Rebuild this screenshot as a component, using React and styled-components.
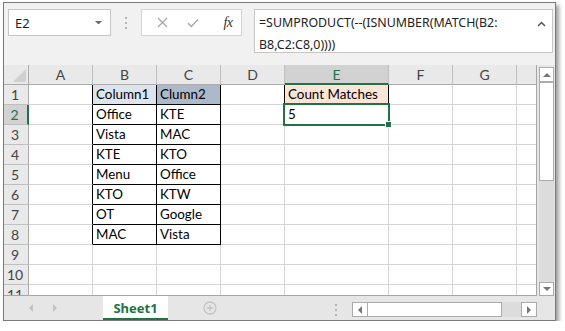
import React from 'react';
import styled, { createGlobalStyle } from 'styled-components';

const Global = createGlobalStyle`
  html, body { margin: 0; padding: 0; background: #ffffff; }
  body { padding: 2px 0 0 3px; font-family: Lato, "Liberation Sans", sans-serif; }
  * { box-sizing: border-box; }
`;

const GREEN = '#217346';
const GRID = '#d4d4d4';
const HEAD_LINE = '#bfbfbf';

const Window = styled.div`
  width: 553px;
  border: 1px solid #7a7a7a;
  box-shadow: 3px 3px 4px rgba(0, 0, 0, 0.38);
  background: #e6e6e6;
`;

const FormulaBar = styled.div`
  height: 62px;
  display: flex;
  align-items: flex-start;
  padding: 6px 2px 0 4px;
  background: #f1f1f1;
`;

const NameBox = styled.div`
  width: 103px;
  height: 27px;
  border: 1px solid #c6c6c6;
  background: #fff;
  display: flex;
  align-items: center;
  justify-content: space-between;
  padding: 0 8px 0 6px;
  font: 13px "Noto Sans", sans-serif;
  color: #222;
`;

const Dots = styled.div`
  width: ${p => p.$w}px;
  height: ${p => p.$h}px;
  display: flex;
  flex-direction: column;
  align-items: center;
  justify-content: center;
  gap: 3px;
  & > i {
    width: 2px;
    height: 2px;
    background: #b4b4b4;
    display: block;
  }
`;

const ButtonsBox = styled.div`
  width: 101px;
  height: 27px;
  border: 1px solid #d4d4d4;
  background: #fff;
  display: flex;
  align-items: center;
  padding-left: 14px;
`;

const FxButton = styled.span`
  width: ${p => p.$w}px;
  margin-left: ${p => p.$ml || 0}px;
  display: flex;
  justify-content: center;
  align-items: center;
`;

const FxText = styled.span`
  font: italic 14px "Liberation Serif", serif;
  color: #333;
  letter-spacing: -0.5px;
`;

const FormulaBox = styled.div`
  flex: 1;
  margin-left: 12px;
  height: 44px;
  border: 1px solid #c6c6c6;
  background: #fff;
  display: flex;
  justify-content: space-between;
  padding: 2px 6px 0 4px;
`;

const FormulaText = styled.div`
  font: 12.4px "Noto Sans", sans-serif;
  line-height: 22px;
  color: #222;
  white-space: nowrap;
`;

const Sheet = styled.div`
  display: flex;
  height: 231px;
`;

const GridArea = styled.div`
  position: relative;
  width: 533px;
  height: 231px;
  overflow: hidden;
  border-right: 1px solid #a6a6a6;
  border-bottom: 1px solid #a6a6a6;
  background: #fff;
`;

const Grid = styled.div`
  display: grid;
  grid-template-columns: 25px 64px 64px 64px 64px 104px 64px 64px 64px;
  grid-auto-rows: 20px;
`;

const HeadCell = styled.div`
  background: ${p => (p.$sel ? '#d2d2d2' : '#e9e9e9')};
  border-right: 1px solid ${HEAD_LINE};
  border-bottom: ${p => (p.$sel ? `2px solid ${GREEN}` : `1px solid #ababab`)};
  color: ${p => (p.$sel ? GREEN : '#444')};
  font: 14px Lato, sans-serif;
  display: flex;
  align-items: center;
  justify-content: center;
`;

const RowHead = styled.div`
  background: ${p => (p.$sel ? '#d2d2d2' : '#e9e9e9')};
  border-right: ${p => (p.$sel ? `2px solid ${GREEN}` : `1px solid #ababab`)};
  border-bottom: 1px solid ${HEAD_LINE};
  color: ${p => (p.$sel ? GREEN : '#444')};
  font: 14px Lato, sans-serif;
  display: flex;
  align-items: center;
  justify-content: center;
  padding-right: 2px;
`;

const Corner = styled.div`
  background: #e9e9e9;
  border-right: 1px solid #ababab;
  border-bottom: 1px solid #ababab;
  display: flex;
  align-items: flex-end;
  justify-content: flex-end;
  padding: 0 2px 2px 0;
`;

const Cell = styled.div`
  border-right: 1px solid ${p => p.$rc || GRID};
  border-bottom: 1px solid ${p => p.$bc || GRID};
  background: ${p => p.$bg || '#fff'};
  font: 13.4px Lato, sans-serif;
  color: #000;
  padding: 0 3px;
  line-height: 19px;
  white-space: nowrap;
  overflow: hidden;
`;

const Selection = styled.div`
  position: absolute;
  left: 279px;
  top: 38px;
  width: 107px;
  height: 23px;
  border: 2px solid ${GREEN};
  pointer-events: none;
`;

const FillHandle = styled.div`
  position: absolute;
  left: 381px;
  top: 56px;
  width: 7px;
  height: 7px;
  background: ${GREEN};
  border: 1px solid #fff;
`;

const VScroll = styled.div`
  width: 18px;
  display: flex;
  flex-direction: column;
  padding: 2px 1px 0 2px;
  background: #e6e6e6;
`;

const ArrowBtn = styled.div`
  width: ${p => p.$w}px;
  height: ${p => p.$h}px;
  flex: none;
  background: #fff;
  border: 1px solid #ababab;
  display: flex;
  align-items: center;
  justify-content: center;
`;

const VTrack = styled.div`
  flex: 1;
  background: #dcdcdc;
`;

const VThumb = styled.div`
  height: 99px;
  background: #fff;
  border: 1px solid #ababab;
`;

const TabBar = styled.div`
  height: 24px;
  display: flex;
  align-items: stretch;
  padding-right: 18px;
  background: #e6e6e6;
`;

const TabNav = styled.div`
  width: 99px;
  display: flex;
  align-items: center;
  padding-left: 25px;
  gap: 20px;
`;

const Tab = styled.div`
  width: 65px;
  background: #fff;
  border-bottom: 2px solid ${GREEN};
  display: flex;
  align-items: center;
  justify-content: center;
  padding-top: 1px;
  font: bold 13px "Noto Sans", sans-serif;
  color: ${GREEN};
`;

const AddSheet = styled.div`
  margin-left: 35px;
  display: flex;
  align-items: center;
`;

const HScrollGroup = styled.div`
  margin-left: auto;
  display: flex;
  align-items: flex-start;
  padding-top: 6px;
  gap: 8px;
`;

const HScroll = styled.div`
  width: 185px;
  height: 15px;
  display: flex;
`;

const HThumb = styled.div`
  width: 134px;
  background: #fff;
  border: 1px solid #ababab;
  border-left: none;
`;

const HTrack = styled.div`
  flex: 1;
  background: #dcdcdc;
`;

const Caret = styled.svg`
  flex: none;
  margin-top: 9px;
`;

const Tri = ({ dir, color = '#777', size = 4 }) => {
  const s = size;
  const pts = {
    up: `0,${s} ${s},0 ${2 * s},${s}`,
    down: `0,0 ${2 * s},0 ${s},${s}`,
    left: `${s},0 ${s},${2 * s} 0,${s}`,
    right: `0,0 ${s},${s} 0,${2 * s}`,
  }[dir];
  const w = dir === 'up' || dir === 'down' ? 2 * s : s;
  const h = dir === 'up' || dir === 'down' ? s : 2 * s;
  return (
    <svg width={w} height={h} viewBox={`0 0 ${w} ${h}`}>
      <polygon points={pts} fill={color} />
    </svg>
  );
};

const columns = [
  { k: 'A' }, { k: 'B' }, { k: 'C' }, { k: 'D' }, { k: 'E' }, { k: 'F' }, { k: 'G' }, { k: 'H', label: '' },
];

const data = {
  1: { B: 'Column1', C: 'Clumn2', E: 'Count Matches' },
  2: { B: 'Office', C: 'KTE', E: '5' },
  3: { B: 'Vista', C: 'MAC' },
  4: { B: 'KTE', C: 'KTO' },
  5: { B: 'Menu', C: 'Office' },
  6: { B: 'KTO', C: 'KTW' },
  7: { B: 'OT', C: 'Google' },
  8: { B: 'MAC', C: 'Vista' },
};

const fills = { B1: '#dde4ee', C1: '#acb9ca', E1: '#fce4d6' };

function cellStyle(r, k) {
  const inTable = r >= 1 && r <= 8;
  let rc;
  let bc;
  if (inTable && (k === 'A' || k === 'B' || k === 'C')) rc = '#000';
  if (r === 1 && (k === 'D' || k === 'E')) rc = '#000';
  if (inTable && (k === 'B' || k === 'C')) bc = '#000';
  return { rc, bc, bg: fills[`${k}${r}`] };
}

export default function App() {
  const rows = Array.from({ length: 11 }, (_, i) => i + 1);
  return (
    <>
      <Global />
      <Window>
        <FormulaBar>
          <NameBox>
            <span>E2</span>
            <Tri dir="down" size={3.5} color="#6a6a6a" />
          </NameBox>
          <Dots $w={30} $h={27}>
            <i /><i /><i />
          </Dots>
          <ButtonsBox>
            <FxButton $w={12}>
              <svg width="11" height="11" viewBox="0 0 11 11">
                <path d="M1 1 L10 10 M10 1 L1 10" stroke="#a8a8a8" strokeWidth="1.3" fill="none" />
              </svg>
            </FxButton>
            <FxButton $w={26} $ml={12}>
              <svg width="12" height="10" viewBox="0 0 12 10">
                <path d="M1 5.2 L4.3 8.5 L11 1.5" stroke="#a8a8a8" strokeWidth="1.4" fill="none" />
              </svg>
            </FxButton>
            <FxButton $w={20} $ml={12}>
              <FxText>fx</FxText>
            </FxButton>
          </ButtonsBox>
          <FormulaBox>
            <FormulaText>
              =SUMPRODUCT(--(ISNUMBER(MATCH(B2:
              <br />
              B8,C2:C8,0))))
            </FormulaText>
            <Caret width="9" height="6" viewBox="0 0 9 6">
              <path d="M1 5 L4.5 1.5 L8 5" stroke="#555" strokeWidth="1.5" fill="none" />
            </Caret>
          </FormulaBox>
        </FormulaBar>

        <Sheet>
          <GridArea>
            <Grid>
              <Corner>
                <svg width="13" height="13" viewBox="0 0 13 13">
                  <polygon points="13,0 13,13 0,13" fill="#d0d0d0" />
                </svg>
              </Corner>
              {columns.map(c => (
                <HeadCell key={c.k} $sel={c.k === 'E'}>
                  {c.label === undefined ? c.k : c.label}
                </HeadCell>
              ))}
              {rows.map(r => (
                <React.Fragment key={r}>
                  <RowHead $sel={r === 2}>{r}</RowHead>
                  {columns.map(c => {
                    const s = cellStyle(r, c.k);
                    return (
                      <Cell key={c.k} $rc={s.rc} $bc={s.bc} $bg={s.bg}>
                        {(data[r] && data[r][c.k]) || ''}
                      </Cell>
                    );
                  })}
                </React.Fragment>
              ))}
            </Grid>
            <Selection />
            <FillHandle />
          </GridArea>
          <VScroll>
            <ArrowBtn $w={15} $h={15}>
              <Tri dir="up" size={4} />
            </ArrowBtn>
            <VTrack>
              <VThumb />
            </VTrack>
            <ArrowBtn $w={15} $h={14}>
              <Tri dir="down" size={4} />
            </ArrowBtn>
          </VScroll>
        </Sheet>

        <TabBar>
          <TabNav>
            <Tri dir="left" size={4} color="#c2c2c2" />
            <Tri dir="right" size={4} color="#c2c2c2" />
          </TabNav>
          <Tab>Sheet1</Tab>
          <AddSheet>
            <svg width="14" height="14" viewBox="0 0 14 14">
              <circle cx="7" cy="7" r="6" stroke="#c4c4c4" strokeWidth="1.3" fill="none" />
              <path d="M7 3.8 V10.2 M3.8 7 H10.2" stroke="#c4c4c4" strokeWidth="1.4" />
            </svg>
          </AddSheet>
          <HScrollGroup>
            <Dots $w={16} $h={15}>
              <i /><i /><i />
            </Dots>
            <HScroll>
              <ArrowBtn $w={16} $h={15}>
                <Tri dir="left" size={4} />
              </ArrowBtn>
              <HThumb />
              <HTrack />
              <ArrowBtn $w={16} $h={15}>
                <Tri dir="right" size={4} />
              </ArrowBtn>
            </HScroll>
          </HScrollGroup>
        </TabBar>
      </Window>
    </>
  );
}
